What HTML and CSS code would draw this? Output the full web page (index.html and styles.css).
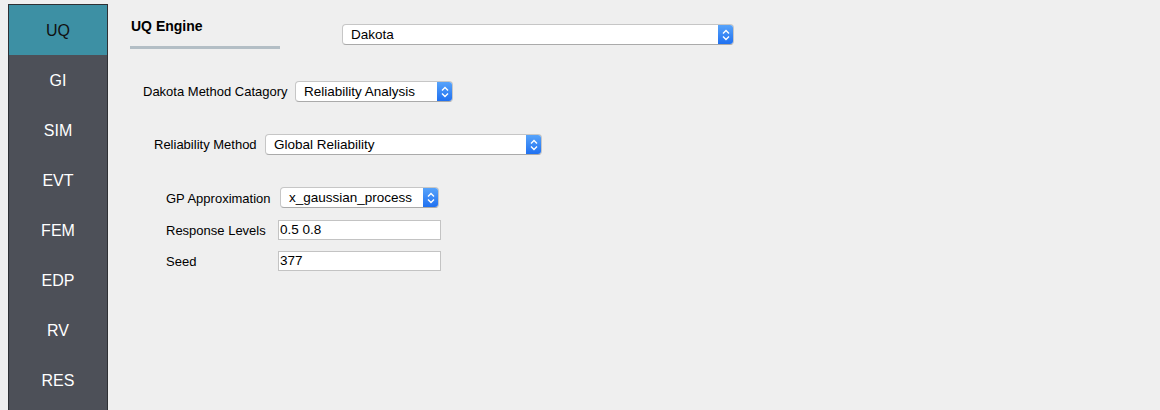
FILE: index.html
```html
<!DOCTYPE html>
<html>
<head>
<meta charset="utf-8">
<link rel="stylesheet" href="styles.css">
</head>
<body>
<div class="app">
  <nav class="sidebar">
    <div class="nav-item active">UQ</div>
    <div class="nav-item">GI</div>
    <div class="nav-item">SIM</div>
    <div class="nav-item">EVT</div>
    <div class="nav-item">FEM</div>
    <div class="nav-item">EDP</div>
    <div class="nav-item">RV</div>
    <div class="nav-item">RES</div>
  </nav>
  <main class="content">
    <div class="engine-row">
      <div class="engine-title">
        <div class="engine-text">UQ Engine</div>
        <div class="engine-line"></div>
      </div>
      <div class="combo combo-engine">
        <span class="combo-text">Dakota</span>
        <span class="stepper"><svg width="16" height="20" viewBox="0 0 16 20"><polyline points="5,8.5 8,5.5 11,8.5" fill="none" stroke="#fff" stroke-width="1.4"/><polyline points="5,11.5 8,14.5 11,11.5" fill="none" stroke="#fff" stroke-width="1.4"/></svg></span>
      </div>
    </div>

    <div class="row row-category">
      <label class="lbl">Dakota Method Catagory</label>
      <div class="combo combo-category">
        <span class="combo-text">Reliability Analysis</span>
        <span class="stepper"><svg width="16" height="20" viewBox="0 0 16 20"><polyline points="5,8.5 8,5.5 11,8.5" fill="none" stroke="#fff" stroke-width="1.4"/><polyline points="5,11.5 8,14.5 11,11.5" fill="none" stroke="#fff" stroke-width="1.4"/></svg></span>
      </div>
    </div>

    <div class="row row-method">
      <label class="lbl">Reliability Method</label>
      <div class="combo combo-method">
        <span class="combo-text">Global Reliability</span>
        <span class="stepper"><svg width="16" height="20" viewBox="0 0 16 20"><polyline points="5,8.5 8,5.5 11,8.5" fill="none" stroke="#fff" stroke-width="1.4"/><polyline points="5,11.5 8,14.5 11,11.5" fill="none" stroke="#fff" stroke-width="1.4"/></svg></span>
      </div>
    </div>

    <div class="params">
      <label class="lbl">GP Approximation</label>
      <div class="combo combo-gp">
        <span class="combo-text">x_gaussian_process</span>
        <span class="stepper"><svg width="16" height="20" viewBox="0 0 16 20"><polyline points="5,8.5 8,5.5 11,8.5" fill="none" stroke="#fff" stroke-width="1.4"/><polyline points="5,11.5 8,14.5 11,11.5" fill="none" stroke="#fff" stroke-width="1.4"/></svg></span>
      </div>
      <label class="lbl">Response Levels</label>
      <div class="field">0.5 0.8</div>
      <label class="lbl">Seed</label>
      <div class="field">377</div>
    </div>
  </main>
</div>
</body>
</html>
```

FILE: styles.css
```css
html, body {
  margin: 0;
  padding: 0;
  height: 100%;
  background: #efefef;
  font-family: "Liberation Sans", Arial, sans-serif;
  font-size: 13px;
  color: #000;
}

.app {
  display: flex;
  height: 100%;
}

.sidebar {
  margin: 4px 0 0 8px;
  width: 98px;
  background: #4d5058;
  border: 1px solid #2e3034;
  border-bottom: none;
  display: flex;
  flex-direction: column;
}

.nav-item {
  height: 50px;
  display: flex;
  align-items: center;
  justify-content: center;
  padding-top: 2px;
  box-sizing: border-box;
  color: #fff;
  font-size: 16px;
}

.nav-item.active {
  background: #3d90a4;
  color: #111;
}

.content {
  flex: 1;
  padding-left: 22px;
}

.engine-row {
  display: flex;
  align-items: flex-start;
}

.engine-title {
  width: 150px;
  padding-top: 18px;
}

.engine-text {
  font-weight: bold;
  font-size: 14px;
  line-height: 16px;
  padding-left: 1px;
}

.engine-line {
  margin-top: 12px;
  height: 3px;
  background: #b3bec5;
}

.combo-engine {
  margin: 24px 0 0 62px;
  width: 392px;
}

.combo {
  display: flex;
  align-items: center;
  height: 21px;
  box-sizing: border-box;
  background: #fff;
  border: 1px solid #c6c6c6;
  border-bottom-color: #aaa;
  border-radius: 4px;
  overflow: hidden;
  font-size: 13.5px;
}

.combo-text {
  flex: 1;
  padding-left: 8px;
  white-space: nowrap;
}

.stepper {
  width: 16px;
  align-self: stretch;
  margin: -1px -1px -1px 0;
  background: linear-gradient(#5aa6fb, #1d6ef0);
  display: flex;
  align-items: center;
  justify-content: center;
}

.row {
  display: flex;
  align-items: center;
}

.row-category {
  margin: 32px 0 0 13px;
}

.row-category .lbl {
  width: 152px;
}

.combo-category {
  width: 158px;
}

.row-method {
  margin: 32px 0 0 24px;
}

.row-method .lbl {
  width: 111px;
}

.combo-method {
  width: 277px;
}

.params {
  margin: 32px 0 0 36px;
  display: grid;
  grid-template-columns: 112px 163px;
  row-gap: 11px;
  align-items: center;
}

.combo-gp {
  width: 159px;
  margin-left: 2px;
  margin-bottom: 1px;
}

.field {
  height: 20px;
  box-sizing: border-box;
  background: #fff;
  border: 1px solid #c3c3c3;
  padding-left: 1px;
  line-height: 18px;
  font-size: 13.5px;
}
```
